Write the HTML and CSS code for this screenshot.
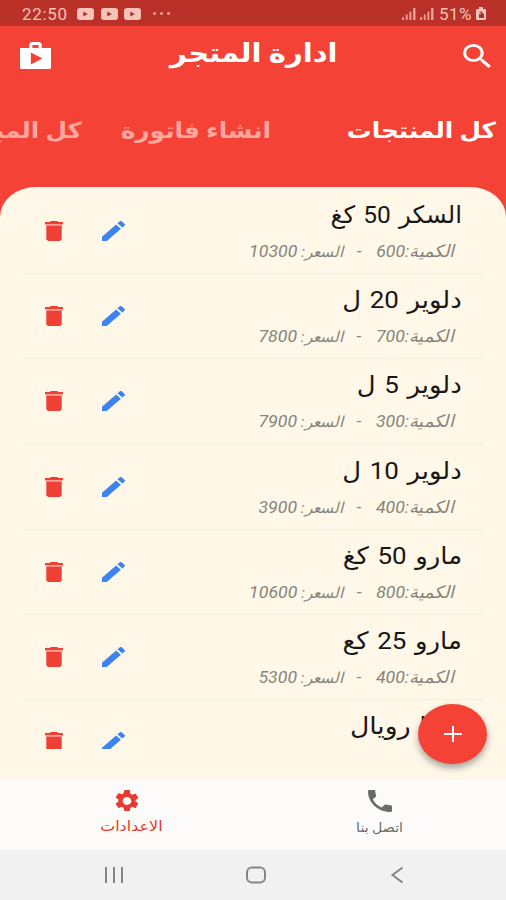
FILE: index.html
```
<!DOCTYPE html>
<html lang="ar" dir="rtl">
<head>
    <meta charset="UTF-8">
    <meta name="viewport" content="width=device-width, initial-scale=1.0">
    <title>ادارة المتجر</title>
    <link rel="stylesheet" href="styles.css">
</head>
<body>
    <!-- Shared icons -->
    <svg class="sprite" aria-hidden="true">
        <symbol id="trash" viewBox="5 3 14 18" preserveAspectRatio="none">
            <path d="M6 19c0 1.1.9 2 2 2h8c1.1 0 2-.9 2-2V7H6v12zM19 4h-3.5l-1-1h-5l-1 1H5v2h14V4z"/>
            <path class="lid" d="M5 6h14v1H5z"/>
        </symbol>
        <symbol id="pencil" viewBox="3 3 18 18" preserveAspectRatio="none">
            <path d="M3 17.25V21h3.75L17.81 9.94l-3.75-3.75L3 17.25zM20.71 7.04a1 1 0 0 0 0-1.41l-2.34-2.34a1 1 0 0 0-1.41 0l-1.83 1.83 3.75 3.75 1.83-1.83z"/>
        </symbol>
        <symbol id="video" viewBox="0 0 17 12">
            <rect width="17" height="12" rx="3"/>
            <path class="cut" d="M6.3 3.5v5l4.6-2.5z"/>
        </symbol>
        <symbol id="signal" viewBox="0 0 15 13">
            <path d="M0 10h2v3H0zM4 7h2v6H4zM8 4h2v9H8zM12 0h2.5v13H12z"/>
        </symbol>
    </svg>

    <div class="status-bar" dir="ltr">
        <div class="status-left">
            <span class="clock">22:50</span>
            <svg class="video"><use href="#video"/></svg>
            <svg class="video"><use href="#video"/></svg>
            <svg class="video"><use href="#video"/></svg>
            <svg class="dots" viewBox="0 0 17 3"><circle cx="1.5" cy="1.5" r="1.3"/><circle cx="8.5" cy="1.5" r="1.3"/><circle cx="15.5" cy="1.5" r="1.3"/></svg>
        </div>
        <div class="status-right">
            <svg class="signal"><use href="#signal"/></svg>
            <svg class="signal"><use href="#signal"/></svg>
            <span class="percent">51%</span>
            <svg class="battery" viewBox="0 0 10 13"><path d="M3 0h4v2h2q1 0 1 1v9q0 1-1 1H1q-1 0-1-1V3q0-1 1-1h2z"/><path class="cut" d="M3 6q2-3 4 0v1h1v4H3V7h2V6z"/></svg>
        </div>
    </div>

    <header class="app-bar" dir="ltr">
        <svg class="shop" viewBox="2 2 20 18" preserveAspectRatio="none"><path d="M16 6V4c0-1.11-.89-2-2-2h-4c-1.11 0-2 .89-2 2v2H2v13c0 .6.4 1 1 1h18c.6 0 1-.4 1-1V6h-6zm-6-2h4v2h-4V4zM9 17V9l7.5 4L9 17z"/></svg>
        <h1 dir="rtl">ادارة المتجر</h1>
        <svg class="search" viewBox="3 3 17.5 17.5" preserveAspectRatio="none"><path d="M15.5 14h-.79l-.28-.27A6.47 6.47 0 0 0 16 9.5 6.5 6.5 0 1 0 9.5 16c1.61 0 3.09-.59 4.23-1.57l.27.28v.79l5 4.99L20.49 19l-4.99-5zm-6 0C7.01 14 5 11.99 5 9.5S7.01 5 9.5 5 14 7.01 14 9.5 11.99 14 9.5 14z"/></svg>
    </header>

    <nav class="tabs">
        <a class="tab active">كل المنتجات</a>
        <a class="tab">انشاء فاتورة</a>
        <a class="tab">كل المبيعات</a>
    </nav>

    <main class="products">
        <ul class="product-list" id="productList"></ul>
        <button class="add" aria-label="اضافة">
            <svg viewBox="0 0 18 16"><path d="M0 7h8V0h2v7h8v2h-8v7H8V9H0z"/></svg>
        </button>
    </main>

    <nav class="bottom-nav">
        <a class="nav-item">
            <svg class="phone" viewBox="3 3 18 18" preserveAspectRatio="none"><path d="M6.62 10.79c1.44 2.83 3.76 5.14 6.59 6.59l2.2-2.2c.27-.27.67-.36 1.02-.24 1.12.37 2.33.57 3.57.57.55 0 1 .45 1 1V20c0 .55-.45 1-1 1C10.61 21 3 13.39 3 4c0-.55.45-1 1-1h3.5c.55 0 1 .45 1 1 0 1.25.2 2.45.57 3.57.11.35.03.74-.25 1.02l-2.2 2.2z"/></svg>
            <span>اتصل بنا</span>
        </a>
        <a class="nav-item active">
            <svg class="gear" viewBox="2 2 20 20" preserveAspectRatio="none"><path d="M19.14 12.94c.04-.3.06-.61.06-.94 0-.32-.02-.64-.07-.94l2.03-1.58a.49.49 0 0 0 .12-.61l-1.92-3.32a.49.49 0 0 0-.59-.22l-2.39.96a7 7 0 0 0-1.62-.94l-.36-2.54A.48.48 0 0 0 13.92 2h-3.84a.48.48 0 0 0-.48.41l-.36 2.54c-.59.24-1.13.57-1.62.94l-2.39-.96a.48.48 0 0 0-.59.22L2.72 8.47a.48.48 0 0 0 .12.61l2.03 1.58c-.05.3-.07.63-.07.94s.02.64.07.94l-2.03 1.58a.49.49 0 0 0-.12.61l1.92 3.32c.12.22.37.29.59.22l2.39-.96c.5.38 1.03.7 1.62.94l.36 2.54c.05.24.24.41.48.41h3.84c.24 0 .44-.17.47-.41l.36-2.54a7 7 0 0 0 1.62-.94l2.39.96c.22.08.47 0 .59-.22l1.92-3.32a.48.48 0 0 0-.12-.61l-2.01-1.58zM12 15.6A3.6 3.6 0 1 1 12 8.4a3.6 3.6 0 0 1 0 7.2z"/></svg>
            <span>الاعدادات</span>
        </a>
    </nav>

    <div class="system-nav" dir="ltr">
        <svg viewBox="0 0 20 18"><path d="M2 1v16M10 1v16M18 1v16"/></svg>
        <svg viewBox="0 0 20 18"><rect x="1" y="1.5" width="18" height="15" rx="5"/></svg>
        <svg viewBox="0 0 20 18"><path d="M14.5 1.5 4.5 9l10 7.5"/></svg>
    </div>

    <script>
        var products = [
            { name: 'السكر 50 كغ', quantity: 600, price: 10300 },
            { name: 'دلوير 20 ل', quantity: 700, price: 7800 },
            { name: 'دلوير 5 ل', quantity: 300, price: 7900 },
            { name: 'دلوير 10 ل', quantity: 400, price: 3900 },
            { name: 'مارو 50 كغ', quantity: 800, price: 10600 },
            { name: 'مارو 25 كع', quantity: 400, price: 5300 },
            { name: 'مارا رويال' }
        ];

        // Build one row for each product
        document.getElementById('productList').innerHTML = products.map(function(product) {
            var details = '';
            if (product.price) {
                details = '<p><span class="quantity">الكمية:' + product.quantity + '</span>' +
                    '<span class="dash">-</span><span class="price">السعر: <b>' + product.price + '</b></span></p>';
            }
            return '<li class="product"><div class="info"><h2>' + product.name + '</h2>' + details + '</div>' +
                '<div class="actions"><svg class="edit"><use href="#pencil"/></svg>' +
                '<svg class="delete"><use href="#trash"/></svg></div></li>';
        }).join('');
    </script>
</body>
</html>
```

FILE: styles.css
```
* {
    box-sizing: border-box;
}
body {
    display: flex;
    flex-direction: column;
    width: 506px;
    height: 900px;
    margin: 0;
    overflow: hidden;
    background-color: #f44336;
    font-family: Roboto, "DejaVu Sans", sans-serif;
}
svg {
    display: block;
    flex: none;
    fill: currentColor;
}
.sprite {
    position: absolute;
    width: 0;
    height: 0;
}
.status-bar {
    display: flex;
    justify-content: space-between;
    height: 26px;
    padding: 1px 20px 0 22px;
    background-color: #b93129;
    color: #f6c3b9;
    font-size: 17px;
}
.status-left,
.status-right {
    display: flex;
    align-items: center;
}
.clock {
    width: 55px;
    letter-spacing: 0.7px;
}
.video {
    width: 17px;
    height: 12px;
    margin-right: 6.5px;
}
.cut {
    fill: #a5352d;
}
.dots {
    width: 17px;
    height: 3px;
    margin-left: 5px;
}
.signal {
    width: 14px;
    height: 12px;
    margin-right: 4px;
    opacity: 0.8;
}
.percent {
    width: 35px;
    margin-left: 1px;
    letter-spacing: 0.4px;
}
.battery {
    width: 10px;
    height: 13px;
    margin-left: 2px;
}
.app-bar {
    display: flex;
    align-items: center;
    justify-content: space-between;
    height: 59px;
    padding: 0 15px 0 20px;
    color: #fff;
}
.app-bar h1 {
    margin: 0 7px 6px 0;
    font-size: 26px;
    line-height: 40px;
    transform: scaleX(1.12);
}
.shop {
    width: 31px;
    height: 27px;
}
.search {
    width: 28px;
    height: 24px;
}
.tabs {
    display: flex;
    height: 102px;
    padding: 28px 10px 0 0;
    overflow: hidden;
}
.tab {
    flex: none;
    width: 150px;
    color: #ffa79f;
    font-size: 22px;
    font-weight: bold;
    line-height: 36px;
    white-space: nowrap;
    transform: scaleX(1.125);
    transform-origin: right;
}
.tab.active {
    margin-left: 75px;
    color: #fff;
}
.tab:last-child {
    margin-right: 39px;
}
.products {
    position: relative;
    flex: 1;
    min-height: 0;
    overflow: hidden;
    background-color: #fff8e9;
    border-radius: 36px 36px 0 0 / 30px 30px 0 0;
}
.product-list {
    margin: 0;
    padding: 2px 22px 0 24px;
    list-style: none;
}
.product {
    display: flex;
    justify-content: space-between;
    height: 85.2px;
    padding: 0 22px;
    border-bottom: 1px solid #f5ebdf;
}
.info h2 {
    margin: 8px 0 0;
    color: #181715;
    font-size: 24px;
    font-weight: normal;
    line-height: 36px;
    white-space: nowrap;
    word-spacing: 2px;
    transform: scaleX(1.08);
    transform-origin: right;
}
.product:first-child h2 {
    transform: scaleX(1.02);
}
.product:last-child h2 {
    transform: scaleX(1.11);
}
.info p {
    display: flex;
    margin: 6px 8px 0 0;
    color: #87847b;
    font-size: 17px;
    font-style: italic;
    line-height: 24px;
    white-space: pre;
    transform: scaleX(1.04);
    transform-origin: right;
}
.dash {
    margin: 0 14px 0 13px;
}
.price {
    font-size: 15px;
}
.price b {
    font-size: 17px;
    font-weight: normal;
    letter-spacing: 0.8px;
}
.actions {
    display: flex;
    gap: 39px;
    height: 54px;
    padding-top: 32px;
    margin-left: -1px;
}
.edit {
    width: 23px;
    height: 20px;
    color: #3c83f1;
}
.delete {
    width: 18px;
    height: 20px;
    color: #ef4035;
}
.lid {
    opacity: 0.4;
}
.product:last-child .actions {
    height: 49px;
    overflow: hidden;
}
.add {
    position: absolute;
    right: 19px;
    bottom: 16px;
    display: flex;
    align-items: center;
    justify-content: center;
    width: 69px;
    height: 60px;
    padding: 0;
    border: none;
    border-radius: 50%;
    background-color: #f44336;
    box-shadow: 0 4px 7px rgba(0, 0, 0, 0.35);
    color: #fff;
}
.add svg {
    width: 18px;
    height: 16px;
}
.bottom-nav {
    display: flex;
    flex: none;
    height: 70px;
    background-color: #fcfbfa;
}
.nav-item {
    display: flex;
    flex: 1;
    flex-direction: column;
    align-items: center;
    padding-top: 10px;
    color: #6b6b6b;
    font-size: 13px;
}
.nav-item.active {
    color: #e53b32;
    font-size: 14px;
}
.nav-item span {
    margin-top: 4px;
    line-height: 24px;
    transform: scaleX(1.09);
}
.nav-item.active span {
    margin: 2px 0 0 9px;
    transform: scaleX(1.14);
}
.phone,
.gear {
    width: 24px;
    height: 22px;
}
.system-nav {
    display: flex;
    flex: none;
    align-items: center;
    justify-content: space-between;
    height: 50px;
    padding: 0 98px 0 104px;
    background-color: #f1f1f1;
    color: #858585;
}
.system-nav svg {
    width: 20px;
    height: 18px;
    fill: none;
    stroke: currentColor;
    stroke-width: 2;
}
```
